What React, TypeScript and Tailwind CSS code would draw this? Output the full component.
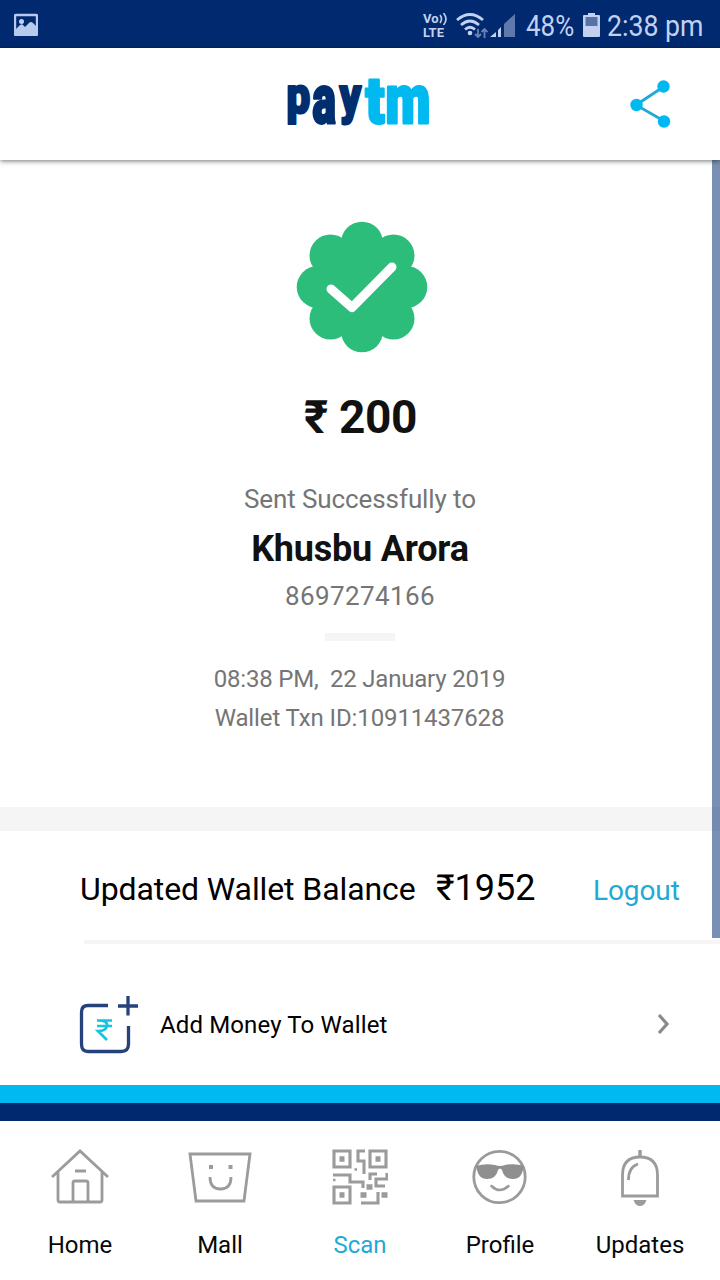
import type { ReactNode } from 'react';

function StatusBar() {
  return (
    <div className="flex h-12 items-center bg-[#002970] text-[#c3d1f0]">
      <svg className="ml-[14px] h-6 w-6" viewBox="0 0 24 24" fill="none">
        <rect x="1" y="3" width="22" height="20" rx="1" stroke="#b8c9ee" strokeWidth="2.4" />
        <circle cx="7.5" cy="9.5" r="2.5" fill="#c3d1f0" />
        <path d="M2 22v-5l4-4q2-1.500 3 0l2 2 4-4q2-2 4 0l3 3v8z" fill="#b8c9ee" />
      </svg>
      <div className="ml-[385px] flex w-[26px] flex-col pt-[3px] text-[13px] leading-[14px] font-bold">
        <span className="flex h-[14px] items-center">
          <span className="w-[16px]">Vo</span>
          <svg className="h-3 w-2" viewBox="0 0 8 12" fill="none" stroke="currentColor" strokeWidth="1.600">
            <path d="M1 2q3 4 0 8M4.500 0q5 6 0 12" />
          </svg>
        </span>
        <span className="">LTE</span>
      </div>
      <svg className="mt-[3px] ml-[7px] h-7 w-8" viewBox="0 0 32 28" fill="none" stroke="#c3d1f0" strokeWidth="2.7">
        <path d="M1 8Q14-3 27 8M5 13Q14 5 23 13M9 17.500Q14 13 19 17.500" />
        <circle cx="14" cy="21" r="2.300" fill="#c3d1f0" stroke="none" />
        <g stroke="#6a82b5" strokeWidth="1.800">
          <path d="M22 17v8m-3-3l3 3 3-3M28.500 26v-9m-3 3l3-3 3 3" />
        </g>
      </svg>
      <svg className="mt-[2px] ml-[2px] h-6 w-[26px]" viewBox="0 0 26 24">
        <path d="M0 24L6 19v5zM8 24v-7l3-3v10z" fill="#c3d1f0" />
        <path d="M14 24V11L25 1v23z" fill="#6079ad" />
      </svg>
      <div className="mt-[3px] ml-[10px] h-9 w-[56px] origin-left scale-x-[0.865] text-[30px] leading-9 whitespace-nowrap">48%</div>
      <svg className="mt-[2px] ml-px h-6 w-[17px]" viewBox="0 0 17 24">
        <path d="M5 0h7v2h4q1 0 1 1v20q0 1-1 1H1q-1 0-1-1V3q0-1 1-1h4z" fill="#c3d1f0" />
        <path d="M2.500 4h12v9h-12z" fill="#5872a8" />
      </svg>
      <div className="mt-[3px] ml-[7px] h-9 w-[105px] shrink-0 origin-left scale-x-[0.89] text-[30px] leading-9 whitespace-nowrap">2:38 pm</div>
    </div>
  );
}

function Logo() {
  return (
    <svg
      className="h-28 w-[160px]"
      viewBox="0 -26 160 112"
      role="img"
      aria-label="paytm"
      fontFamily="Roboto, sans-serif"
      fontWeight="900"
      fontSize="50"
      strokeLinejoin="round"
    >
      <g fill="#002e6e" stroke="#002e6e" strokeWidth="2.200">
        <text transform="translate(6.500 39) scale(.84 1.020)">p</text>
        <text transform="translate(32.500 48.500) scale(.88 1.370)">a</text>
        <text transform="translate(59.500 39) scale(.84 1.020)">y</text>
      </g>
      <g fill="#00b9f1" stroke="#00b9f1" strokeWidth="2.200">
        <text transform="translate(85.500 48.500) scale(1.110 1.300)">t</text>
        <text transform="translate(105.500 48.500) scale(1.040 1.370)">m</text>
      </g>
    </svg>
  );
}

function Header() {
  return (
    <header className="relative z-10 flex h-28 items-center bg-white shadow-[0_1px_5px_rgba(0,0,0,0.55)]">
      <div className="ml-[280px]"><Logo /></div>
      <svg className="ml-[188px] h-[50px] w-[44px]" viewBox="0 0 44 50">
        <path d="M36 8.500L8 27l28 16" transform="translate(0 -1)" fill="none" stroke="#21a8d5" strokeWidth="2.800" />
        <g fill="#00b9f1">
          <circle cx="35.500" cy="7.500" r="6.200" />
          <circle cx="8.500" cy="26" r="6.200" />
          <circle cx="36" cy="42.500" r="6.200" />
        </g>
      </svg>
    </header>
  );
}

function SuccessBadge() {
  return (
    <svg className="h-[132px] w-[132px]" viewBox="-66 -66 132 132">
      <g fill="#2dbd7b">
        <circle r="52" />
        <circle cy="-44.300" r="21" />
        <circle cx="31.500" cy="-31.500" r="21" />
        <circle cx="44.300" r="21" />
        <circle cx="31.500" cy="31.500" r="21" />
        <circle cy="44.300" r="21" />
        <circle cx="-31.500" cy="31.500" r="21" />
        <circle cx="-44.300" r="21" />
        <circle cx="-31.500" cy="-31.500" r="21" />
      </g>
      <path d="M-31 2L-10 20.500L30-20" fill="none" stroke="#fff" strokeWidth="9" strokeLinecap="round" strokeLinejoin="round" />
    </svg>
  );
}

function Receipt() {
  return (
    <section className="flex h-[647px] flex-col items-center pt-[61px] whitespace-pre text-[#757575]">
      <div className="pl-[3px]"><SuccessBadge /></div>
      <div className="mt-[36px] h-[56px] pl-px text-[46px] leading-[56px] font-bold tracking-[-0.4px] text-[#111]">₹ 200</div>
      <div className="mt-[38px] h-8 text-[26px] leading-8 tracking-[-0.1px]">Sent Successfully to</div>
      <div className="mt-[12px] h-11 text-[36px] leading-11 font-bold tracking-[-0.2px] text-[#111]">Khusbu Arora</div>
      <div className="mt-[9px] h-8 text-[26px] leading-8 tracking-[0.4px]">8697274166</div>
      <div className="mt-[21px] h-2 w-[70px] bg-[#f5f5f5]" />
      <div className="mt-[22px] h-[32px] pr-px text-[24px] leading-8 tracking-[-0.2px]">08:38 PM,  22 January 2019</div>
      <div className="mt-[7px] h-8 pr-px text-[24px] leading-8 tracking-[-0.12px]">Wallet Txn ID:10911437628</div>
    </section>
  );
}

function AddMoneyIcon() {
  return (
    <svg className="h-[60px] w-[60px]" viewBox="0 0 60 60" fill="none">
      <path d="M29 10.500H9Q2.500 10.500 2.500 17V49Q2.500 56.500 9 56.500H42Q49.500 56.500 49.500 49V31M49 1v19.500M39 11h20" stroke="#26427c" strokeWidth="3.300" />
      <path d="M18 25.500h15M18 31h15M19 25.500q10 0 9 5.500-1 5-9 5l9 9" stroke="#17c3dd" strokeWidth="2.700" />
    </svg>
  );
}

function HomeIcon() {
  return (
    <svg className="h-14 w-16" viewBox="0 0 64 56" fill="none" stroke="#9b9b9b" strokeWidth="2.800">
      <path d="M4 28L32 2l28 26M10 23v28q0 2 2 2h40q2 0 2-2V23M25 53V34q0-2 2-2h11q2 0 2 2v19M27 22h11" />
    </svg>
  );
}

function MallIcon() {
  return (
    <svg className="h-14 w-16" viewBox="0 0 64 56" fill="none" stroke="#9b9b9b" strokeWidth="2.800">
      <path d="M2 5h60l-6 47H8zM22 28q0 12 10.500 12T43 28" />
      <path d="M21 18h4M40.500 18h4" strokeWidth="4" />
    </svg>
  );
}

function ScanIcon() {
  return (
    <svg className="h-14 w-14" viewBox="0 0 56 56" fill="none" stroke="#9b9b9b" strokeWidth="3.100">
      <path d="M2 2h16v16H2zM38 2h16v16H38zM2 38h16v16H2z" />
      <path d="M33 2h-7v10h6v13M1 26h17v7h13v6M38 31v-6h7M55 24v6H44v7h9M29 54h17V43" />
      <path d="M7.500 10h5M43.500 10h5M7.500 46h5M34.500 38h6M28.500 46h6M49.500 46h6" strokeWidth="5.500" />
      <path d="M22.500 20.500h2.500M1 31h2.500" strokeWidth="2.500" />
    </svg>
  );
}

function ProfileIcon() {
  return (
    <svg className="h-14 w-14" viewBox="0 0 56 56">
      <circle cx="27.500" cy="28" r="25.700" fill="none" stroke="#9b9b9b" strokeWidth="2.800" />
      <path d="M4 17q9-3 19-1 5 2 10 0 10-2 19 1l-1 4q-2 9-10 9-9 0-11-9-2-3-4 0-2 9-11 9-8 0-10-9z" fill="#8f8f8f" />
      <path d="M19.500 37q8 8 17 0" fill="none" stroke="#9b9b9b" strokeWidth="2.500" strokeLinecap="round" />
    </svg>
  );
}

function UpdatesIcon() {
  return (
    <svg className="h-[60px] w-10" viewBox="0 0 40 60" fill="none" stroke="#9b9b9b" strokeWidth="2.800">
      <path d="M2.500 49V28q0-18 17.500-18t17.500 18v21zM8.500 33q0-13 9.500-16" />
      <path d="M20 3v7" strokeWidth="3.500" />
      <path d="M13.500 53h13q-2 6-6.500 6t-6.500-6z" fill="#9b9b9b" stroke="none" />
    </svg>
  );
}

function NavItem({ icon, label, active = false }: { icon: ReactNode; label: string; active?: boolean }) {
  return (
    <div className="flex w-[140px] flex-col items-center">
      <div className="flex h-[60px] items-center">{icon}</div>
      <div className={active ? 'mt-[22px] text-[24px] leading-8 text-[#22a9d6]' : 'mt-[22px] text-[24px] leading-8 text-[#080808]'}>{label}</div>
    </div>
  );
}

export default function App() {
  return (
    <div className="relative h-[1280px] w-[720px] overflow-hidden bg-white font-['Roboto','Noto_Sans',sans-serif]">
      <StatusBar />
      <Header />
      <Receipt />
      <div className="h-6 bg-[#f5f5f5]" />
      <section className="flex h-[109px] items-center pl-20 text-black">
        <span className="mt-[6px] w-[356px] text-[32px] tracking-[-0.1px] whitespace-nowrap">Updated Wallet Balance</span>
        <span className="mt-[4px] w-[157px] text-[36px]">₹1952</span>
        <span className="mt-[10px] text-[28px] tracking-[-0.1px] text-[#22a9d6]">Logout</span>
      </section>
      <div className="ml-[84px] h-1 bg-[#f5f5f5]" />
      <section className="flex h-[141px] items-center pl-[79px]">
        <div className="mt-[20px]"><AddMoneyIcon /></div>
        <span className="mt-[20px] ml-[21px] w-[490px] text-[24px] tracking-[0.13px] text-black">Add Money To Wallet</span>
        <svg className="mt-[19px] h-6 w-5" viewBox="0 0 20 24" fill="none" stroke="#8a8a8a" strokeWidth="3.200">
          <path d="M9 3l8 9-8 9" />
        </svg>
      </section>
      <div className="h-[18px] bg-[#00b9f1]" />
      <div className="h-[18px] bg-[#002970]" />
      <nav className="flex h-[159px] px-[10px] pt-[26px]">
        <NavItem icon={<HomeIcon />} label="Home" />
        <NavItem icon={<MallIcon />} label="Mall" />
        <NavItem icon={<ScanIcon />} label="Scan" active />
        <NavItem icon={<ProfileIcon />} label="Profile" />
        <NavItem icon={<UpdatesIcon />} label="Updates" />
      </nav>
      <div className="absolute top-40 right-0 h-[778px] w-2 bg-[#002970]/52" />
    </div>
  );
}
